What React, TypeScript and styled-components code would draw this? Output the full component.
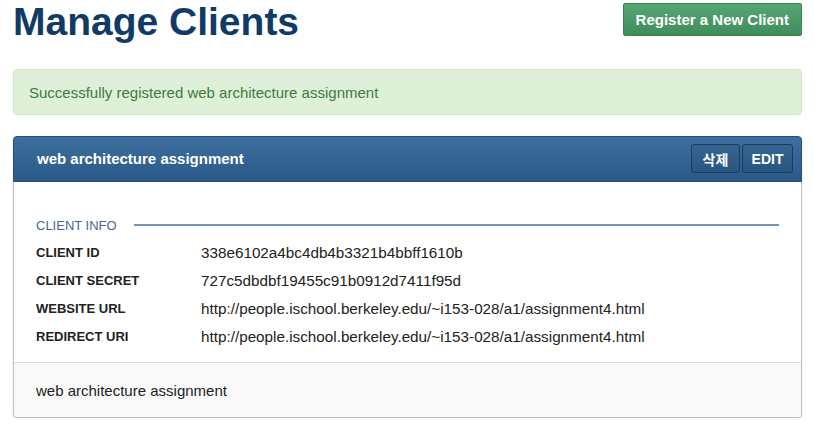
import React from "react";
import styled, { createGlobalStyle } from "styled-components";

const GlobalStyle = createGlobalStyle`
  html, body {
    margin: 0;
    padding: 0;
    background: #ffffff;
    font-family: "Liberation Sans", Arial, "Noto Sans CJK KR", sans-serif;
    color: #333333;
  }
  * { box-sizing: border-box; }
`;

const Page = styled.div`
  padding: 0 12px 0 13px;
  width: 814px;
`;

const TopBar = styled.div`
  display: flex;
  justify-content: space-between;
  align-items: flex-start;
`;

const Title = styled.h1`
  margin: 0;
  font-size: 39px;
  line-height: 43px;
  font-weight: 700;
  color: #0f3b66;
  letter-spacing: 0;
`;

const PrimaryButton = styled.button`
  margin-top: 3px;
  height: 33px;
  padding: 0 12px;
  border: 1px solid #3b8454;
  border-radius: 2px;
  background: linear-gradient(#56a673, #3f8d5b);
  color: #ffffff;
  font-family: inherit;
  font-size: 15px;
  font-weight: 700;
  cursor: pointer;
`;

const Alert = styled.div`
  margin-top: 26px;
  height: 46px;
  display: flex;
  align-items: center;
  padding: 0 15px;
  background: #dff0d8;
  border: 1px solid #d3e7c6;
  border-radius: 4px;
  color: #3f7a40;
  font-size: 15px;
`;

const Panel = styled.section`
  margin-top: 21px;
  border: 1px solid #b3c3d3;
  border-radius: 4px;
  box-shadow: 0 1px 2px rgba(0, 0, 0, 0.12);
  background: #ffffff;
`;

const PanelHeader = styled.header`
  margin: -1px -1px 0;
  height: 46px;
  display: flex;
  align-items: center;
  justify-content: space-between;
  padding: 0 8px 1px 23px;
  background: linear-gradient(#3d6f9d, #29598a);
  border: 1px solid #24507d;
  border-radius: 4px 4px 0 0;
`;

const PanelTitle = styled.h2`
  margin: 0;
  font-size: 15px;
  font-weight: 700;
  color: #ffffff;
`;

const Actions = styled.div`
  display: flex;
  gap: 2px;
`;

const HeaderButton = styled.button<{ $w: number }>`
  width: ${(p) => p.$w}px;
  height: 29px;
  padding: 0;
  border: 1px solid #1b3c5e;
  border-radius: 3px;
  background: linear-gradient(#34648f, #2a5781);
  color: #ffffff;
  font-family: "Liberation Sans", Arial, "Noto Sans CJK KR", sans-serif;
  font-size: 14px;
  font-weight: 700;
  cursor: pointer;
`;

const PanelBody = styled.div`
  padding: 33px 22px 12px;
`;

const SectionTitle = styled.div`
  display: flex;
  align-items: center;
  gap: 17px;
  height: 20px;
  font-size: 13px;
  color: #46698f;
  text-transform: uppercase;
  &::after {
    content: "";
    flex: 1;
    height: 2px;
    background: #7293b3;
  }
`;

const InfoGrid = styled.dl`
  margin: 3px 0 0;
  display: grid;
  grid-template-columns: 165px 1fr;
  grid-auto-rows: 28px;
  align-items: center;
`;

const Label = styled.dt`
  font-size: 13px;
  font-weight: 700;
  color: #222222;
`;

const Value = styled.dd`
  margin: 0;
  font-size: 15.25px;
  color: #222222;
`;

const PanelFooter = styled.footer`
  border-top: 1px solid #dddddd;
  background: #f9f9f9;
  padding: 18px 22px 16px;
  font-size: 15px;
  line-height: 20px;
  color: #222222;
  border-radius: 0 0 4px 4px;
`;

const rows: [string, string][] = [
  ["CLIENT ID", "338e6102a4bc4db4b3321b4bbff1610b"],
  ["CLIENT SECRET", "727c5dbdbf19455c91b0912d7411f95d"],
  ["WEBSITE URL", "http://people.ischool.berkeley.edu/~i153-028/a1/assignment4.html"],
  ["REDIRECT URI", "http://people.ischool.berkeley.edu/~i153-028/a1/assignment4.html"],
];

export default function App() {
  return (
    <>
      <GlobalStyle />
      <Page>
        <TopBar>
          <Title>Manage Clients</Title>
          <PrimaryButton>Register a New Client</PrimaryButton>
        </TopBar>
        <Alert>Successfully registered web architecture assignment</Alert>
        <Panel>
          <PanelHeader>
            <PanelTitle>web architecture assignment</PanelTitle>
            <Actions>
              <HeaderButton $w={49}>삭제</HeaderButton>
              <HeaderButton $w={51}>EDIT</HeaderButton>
            </Actions>
          </PanelHeader>
          <PanelBody>
            <SectionTitle>Client Info</SectionTitle>
            <InfoGrid>
              {rows.map(([k, v]) => (
                <React.Fragment key={k}>
                  <Label>{k}</Label>
                  <Value>{v}</Value>
                </React.Fragment>
              ))}
            </InfoGrid>
          </PanelBody>
          <PanelFooter>web architecture assignment</PanelFooter>
        </Panel>
      </Page>
    </>
  );
}
